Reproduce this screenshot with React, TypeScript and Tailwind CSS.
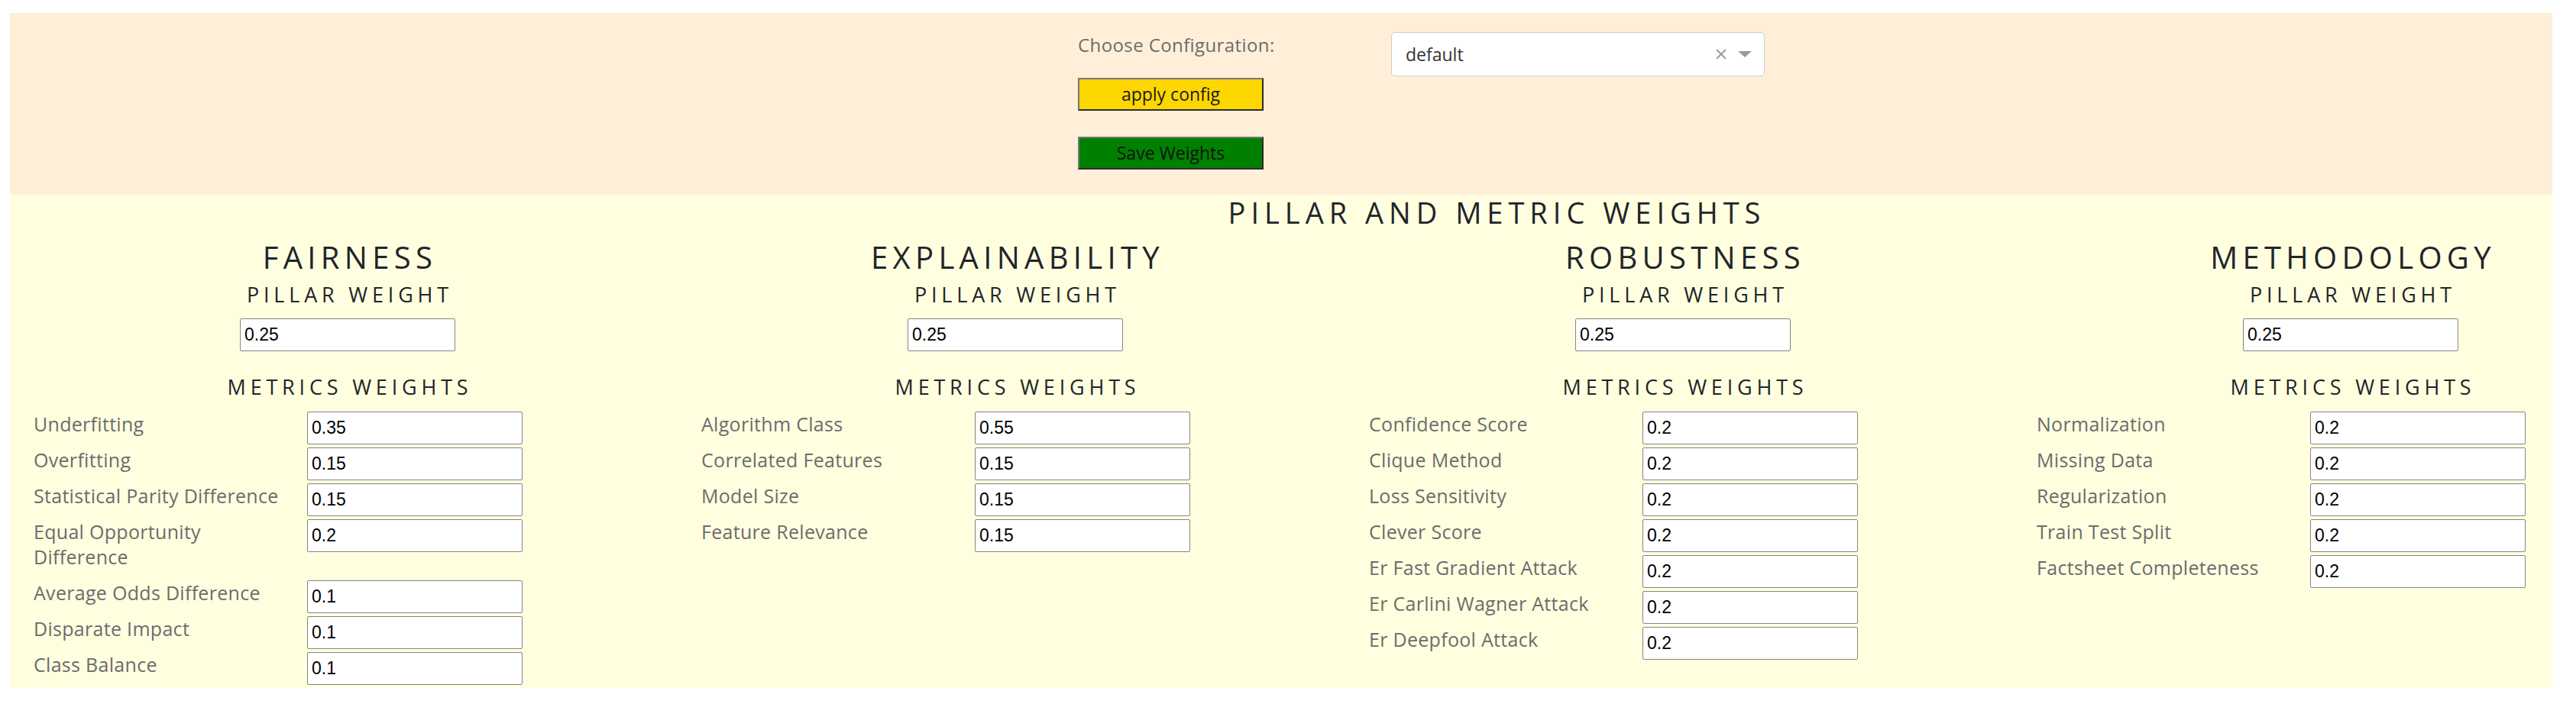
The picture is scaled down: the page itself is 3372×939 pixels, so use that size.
import React from "react";

type Metric = { label: string; value: string };
type Pillar = { name: string; weight: string; metrics: Metric[] };

const pillars: Pillar[] = [
  {
    name: "FAIRNESS",
    weight: "0.25",
    metrics: [
      { label: "Underfitting", value: "0.35" },
      { label: "Overfitting", value: "0.15" },
      { label: "Statistical Parity Difference", value: "0.15" },
      { label: "Equal Opportunity Difference", value: "0.2" },
      { label: "Average Odds Difference", value: "0.1" },
      { label: "Disparate Impact", value: "0.1" },
      { label: "Class Balance", value: "0.1" },
    ],
  },
  {
    name: "EXPLAINABILITY",
    weight: "0.25",
    metrics: [
      { label: "Algorithm Class", value: "0.55" },
      { label: "Correlated Features", value: "0.15" },
      { label: "Model Size", value: "0.15" },
      { label: "Feature Relevance", value: "0.15" },
    ],
  },
  {
    name: "ROBUSTNESS",
    weight: "0.25",
    metrics: [
      { label: "Confidence Score", value: "0.2" },
      { label: "Clique Method", value: "0.2" },
      { label: "Loss Sensitivity", value: "0.2" },
      { label: "Clever Score", value: "0.2" },
      { label: "Er Fast Gradient Attack", value: "0.2" },
      { label: "Er Carlini Wagner Attack", value: "0.2" },
      { label: "Er Deepfool Attack", value: "0.2" },
    ],
  },
  {
    name: "METHODOLOGY",
    weight: "0.25",
    metrics: [
      { label: "Normalization", value: "0.2" },
      { label: "Missing Data", value: "0.2" },
      { label: "Regularization", value: "0.2" },
      { label: "Train Test Split", value: "0.2" },
      { label: "Factsheet Completeness", value: "0.2" },
    ],
  },
];

function NumInput({ value }: { value: string }) {
  return (
    <input
      type="text"
      defaultValue={value}
      className="h-[43px] w-[282px] shrink-0 rounded-[2px] border border-[#858585] bg-white px-[5px] text-[23px] text-black outline-none [font-family:'Liberation_Sans',Arial,sans-serif]"
    />
  );
}

function PillarColumn({ pillar }: { pillar: Pillar }) {
  return (
    <div className="flex w-[874px] shrink-0 flex-col">
      <div className="flex flex-col items-center">
        <div className="mt-[12px] pl-[6px] text-[40px] leading-[47px] tracking-[6.3px] text-[#212529]">
          {pillar.name}
        </div>
        <div className="mt-[10px] pl-[6px] text-[27px] leading-[32px] tracking-[5.8px] text-[#212529]">
          PILLAR WEIGHT
        </div>
        <div className="mt-[15px]">
          <NumInput value={pillar.weight} />
        </div>
        <div className="mt-[31px] pl-[6px] text-[27px] leading-[32px] tracking-[5.8px] text-[#212529]">
          METRICS WEIGHTS
        </div>
      </div>
      <div className="mt-[16px] flex flex-col">
        {pillar.metrics.map((m) => (
          <div key={m.label} className="flex items-start pl-[26px]">
            <div className="w-[358px] shrink-0 pr-[18px] pb-[14px] text-[25px] leading-[33px] tracking-[0.3px] text-[#6c6c6c]">
              {m.label}
            </div>
            <NumInput value={m.value} />
          </div>
        ))}
      </div>
    </div>
  );
}

export default function App() {
  return (
    <div className="h-[939px] w-[3372px] overflow-hidden bg-white [font-family:'Open_Sans','Noto_Sans',sans-serif]">
      <div className="ml-[13px] mt-[17px] w-[3328px]">
        <div className="flex h-[238px] bg-[#ffefd9] pl-[1398px] pt-[25px]">
          <div className="flex w-[410px] shrink-0 flex-col items-start">
            <div className="text-[24px] leading-[33px] tracking-[0.4px] text-[#6c6c6c]">Choose Configuration:</div>
            <button className="mt-[27px] h-[43px] w-[243px] border-2 border-b-[#2b2b2b] border-l-[#767676] border-r-[#2b2b2b] border-t-[#767676] bg-[#ffd700] text-[23px] text-[#1a1a1a]">
              apply config
            </button>
            <button className="mt-[34px] h-[43px] w-[243px] border-2 border-b-[#2b2b2b] border-l-[#767676] border-r-[#2b2b2b] border-t-[#767676] bg-[#008000] text-[23px] text-[#111]">
              Save Weights
            </button>
          </div>
          <div className="flex h-[58px] w-[489px] shrink-0 items-center rounded-[5px] border border-[#cccccc] bg-white pl-[18px] pr-[16px]">
            <span className="flex-1 text-[23px] text-[#333333] [font-family:'Open_Sans',sans-serif]">default</span>
            <svg width="16" height="16" viewBox="0 0 16 16" className="mr-[14px]">
              <path d="M2 2 L14 14 M14 2 L2 14" stroke="#999999" strokeWidth="1.8" />
            </svg>
            <svg width="18" height="8" viewBox="0 0 18 8">
              <path d="M0 0 L18 0 L9 8 Z" fill="#999999" />
            </svg>
          </div>
        </div>
        <div className="h-[646px] bg-[#ffffe0]">
          <div className="flex justify-center pl-[565px]">
            <div className="text-[38px] leading-[46px] tracking-[7px] text-[#212529]">
              PILLAR AND METRIC WEIGHTS
            </div>
          </div>
          <div className="flex pl-[5px]">
            {pillars.map((p) => (
              <PillarColumn key={p.name} pillar={p} />
            ))}
          </div>
        </div>
      </div>
    </div>
  );
}
